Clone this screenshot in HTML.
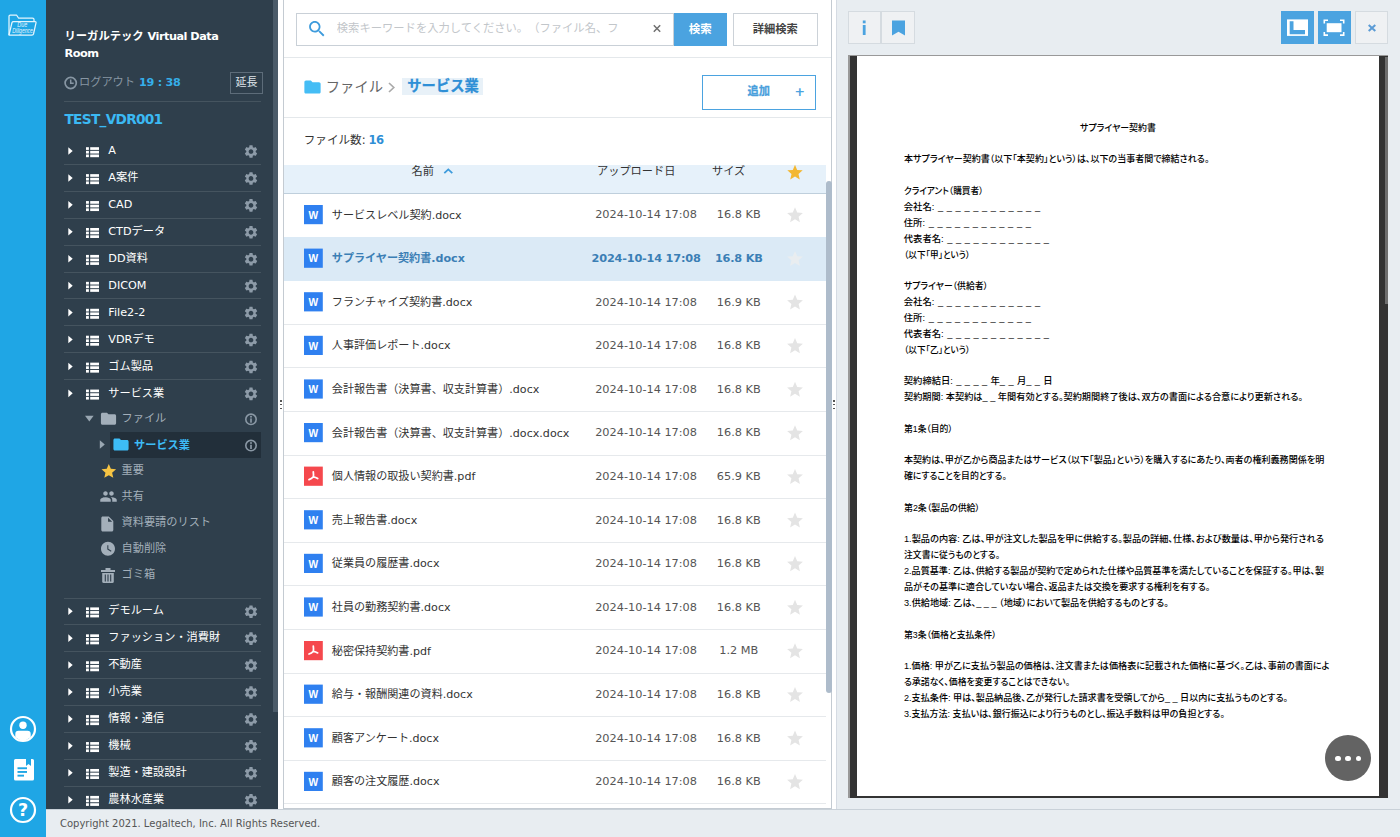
<!DOCTYPE html><html lang="ja"><head><meta charset="utf-8"><title>リーガルテック Virtual Data Room</title><style>
html,body{margin:0;padding:0}
body{width:1400px;height:837px;overflow:hidden;position:relative;background:#e8edf1;font-family:"DejaVu Sans","Liberation Sans","Noto Sans CJK JP",sans-serif;font-size:11.2px;color:#333}
div,span{box-sizing:border-box}
.a{position:absolute;white-space:nowrap}
.t{position:absolute;white-space:nowrap;line-height:20px;height:20px}
.rail{left:0;top:0;width:46px;height:837px;background:#1fa6e5}
.side{left:46px;top:0;width:232.5px;height:809px;background:#2f3f4c}
.sthumb{left:273px;top:0;width:5.2px;height:712px;background:#4b5b69}
.sdiv{left:64px;width:197px;height:1px;background:#45545f}
.srow{color:#fff;font-size:11.2px}
.sub{color:#a3afba;font-size:11.2px}
.foot{left:46px;top:809px;width:1354px;height:28px;background:#e8edf1;border-top:1px solid #c9d1d8}
.mid{left:283px;top:-1px;width:549px;height:810px;background:#fff;border:1px solid #c4cbd2}
.hl{left:284px;width:547px;height:1px;background:#e4e8eb}
.row{left:284px;width:542px}
.rt{font-size:11.2px;color:#333}
.rd{font-size:11px;color:#555}
.doc{font-family:"Liberation Sans","Noto Sans CJK JP",sans-serif;font-size:9.3px;color:#000;font-feature-settings:"palt";line-height:14px;height:14px;transform-origin:0 50%;font-weight:500}
</style></head><body>
<div class="a rail"></div>
<svg width="29" height="22" viewBox="0 0 29 22" style="position:absolute;left:8px;top:14px"><g fill="none" stroke="#e4f5fd" stroke-width="1.250" stroke-linejoin="round"><path d="M1 21V2.2Q1 1 2.200 1H8.500L10.500 4H24.500Q26 4 26 5.500V7.500"/><path d="M1 21L4 8.500Q4.300 7.500 5.500 7.500H27Q28.300 7.500 28 8.800L25.500 20Q25.200 21 24 21H1z"/></g>
<text x="9.300" y="13.400" font-size="6.400" fill="#e4f5fd" textLength="10" lengthAdjust="spacingAndGlyphs" font-family="Liberation Sans,sans-serif" font-style="italic">Due</text>
<text x="4.200" y="19.400" font-size="6.400" fill="#e4f5fd" textLength="20.500" lengthAdjust="spacingAndGlyphs" font-family="Liberation Sans,sans-serif" font-style="italic">Diligence</text></svg>
<svg width="28" height="28" viewBox="0 0 28 28" style="position:absolute;left:9px;top:715px"><circle cx="14" cy="14" r="12" fill="none" stroke="#fff" stroke-width="2.200"/><circle cx="14" cy="10.300" r="3.700" fill="#fff"/><path d="M6.300 22.300V19Q6.300 15.800 9.500 15.800H18.500Q21.700 15.800 21.700 19V22.300Q18.200 25.300 14 25.300Q9.800 25.300 6.300 22.300z" fill="#fff"/></svg>
<svg width="20" height="22" viewBox="0 0 20 22" style="position:absolute;left:14px;top:759px"><path d="M1.500 0H12V7L14.500 5L17 7V0H18.500Q20 0 20 1.500V20Q20 21.500 18.500 21.500H1.500Q0 21.500 0 20V1.500Q0 0 1.500 0z" fill="#fff"/><rect x="3.500" y="8.300" width="9.500" height="1.900" fill="#1fa6e5"/><rect x="3.500" y="12" width="9.500" height="1.900" fill="#1fa6e5"/><rect x="3.500" y="15.700" width="6.500" height="1.900" fill="#1fa6e5"/></svg>
<svg width="28" height="28" viewBox="0 0 28 28" style="position:absolute;left:9px;top:796px"><circle cx="14" cy="14" r="12" fill="none" stroke="#fff" stroke-width="2.200"/><text x="14" y="20.300" font-size="17.500" font-weight="bold" fill="#fff" text-anchor="middle" font-family="DejaVu Sans,Liberation Sans,sans-serif">?</text></svg>
<div class="a side"></div><div class="a sthumb"></div>
<div class="a" style="left:64.5px;top:28.2px;width:190px;white-space:normal;color:#fff;font-weight:bold;font-size:11.3px;line-height:17.1px">リーガルテック <span style="letter-spacing:-0.5px">Virtual Data Room</span></div>
<svg width="15" height="14" viewBox="0 0 15 14" style="position:absolute;left:63px;top:76px"><g transform="translate(0.700 0.000)"><circle cx="7" cy="7" r="5.600" fill="none" stroke="#8796a3" stroke-width="1.700"/><path d="M7 3.600V7.300H10" fill="none" stroke="#8796a3" stroke-width="1.500"/></g></svg>
<div class="t " style="left:79px;top:72.5px;color:#8796a3;font-size:11.200px">ログアウト</div>
<div class="t " style="left:139px;top:72.5px;color:#35aeea;font-weight:bold;font-size:11.2px;letter-spacing:-0.25px">19 : 38</div>
<div class="a" style="left:230px;top:72px;width:33px;height:22px;border:1px solid #5d6c79;color:#dfe5ea;font-size:11px;line-height:20px;text-align:center">延長</div>
<div class="a sdiv" style="top:101px"></div>
<div class="t " style="left:64.5px;top:109.0px;color:#3bb9f3;font-weight:bold;font-size:13.7px;letter-spacing:-0.72px">TEST_VDR001</div>
<svg width="5" height="8" viewBox="0 0 5 8" style="position:absolute;left:68px;top:147px"><g transform="translate(0.300 0.200)"><path d="M0 0L4.4 3.8L0 7.6z" fill="#fff"/></g></svg>
<svg width="13" height="11" viewBox="0 0 13 11" style="position:absolute;left:86px;top:147px"><g transform="translate(0.000 0.200)"><rect x="0" y="0" width="2.9" height="2.7" fill="#fff"/><rect x="4.2" y="0" width="8.8" height="2.7" fill="#fff"/><rect x="0" y="3.65" width="2.9" height="2.7" fill="#fff"/><rect x="4.2" y="3.65" width="8.8" height="2.7" fill="#fff"/><rect x="0" y="7.3" width="2.9" height="2.7" fill="#fff"/><rect x="4.2" y="7.3" width="8.8" height="2.7" fill="#fff"/></g></svg>
<div class="t srow" style="left:108.3px;top:141.2px;">A</div>
<svg width="16" height="17" viewBox="0 0 24.4586 25.9873" style="position:absolute;left:243px;top:143px"><g transform="translate(0.229 0.994)"><path d="M19.14 12.94c.04-.3.06-.61.06-.94 0-.32-.02-.64-.07-.94l2.03-1.58c.18-.14.23-.41.12-.61l-1.92-3.32c-.12-.22-.37-.29-.59-.22l-2.39.96c-.5-.38-1.03-.7-1.62-.94l-.36-2.54c-.04-.24-.24-.41-.48-.41h-3.84c-.24 0-.43.17-.47.41l-.36 2.54c-.59.24-1.13.57-1.62.94l-2.39-.96c-.22-.08-.47 0-.59.22L2.74 8.87c-.12.21-.08.47.12.61l2.03 1.58c-.05.3-.09.63-.09.94s.02.64.07.94l-2.03 1.58c-.18.14-.23.41-.12.61l1.92 3.32c.12.22.37.29.59.22l2.39-.96c.5.38 1.03.7 1.62.94l.36 2.54c.05.24.24.41.48.41h3.84c.24 0 .44-.17.47-.41l.36-2.54c.59-.24 1.13-.56 1.62-.94l2.39.96c.22.08.47 0 .59-.22l1.92-3.32c.12-.22.07-.47-.12-.61l-2.01-1.58zM12 15.6c-1.98 0-3.6-1.62-3.6-3.6s1.62-3.6 3.6-3.6 3.6 1.62 3.6 3.6-1.62 3.6-3.6 3.6z" fill="#8d9ba8"/></g></svg>
<div class="a sdiv" style="top:163.8px"></div>
<svg width="5" height="8" viewBox="0 0 5 8" style="position:absolute;left:68px;top:174px"><g transform="translate(0.300 0.130)"><path d="M0 0L4.4 3.8L0 7.6z" fill="#fff"/></g></svg>
<svg width="13" height="11" viewBox="0 0 13 11" style="position:absolute;left:86px;top:174px"><g transform="translate(0.000 0.130)"><rect x="0" y="0" width="2.9" height="2.7" fill="#fff"/><rect x="4.2" y="0" width="8.8" height="2.7" fill="#fff"/><rect x="0" y="3.65" width="2.9" height="2.7" fill="#fff"/><rect x="4.2" y="3.65" width="8.8" height="2.7" fill="#fff"/><rect x="0" y="7.3" width="2.9" height="2.7" fill="#fff"/><rect x="4.2" y="7.3" width="8.8" height="2.7" fill="#fff"/></g></svg>
<div class="t srow" style="left:108.3px;top:168.13px;">A案件</div>
<svg width="16" height="17" viewBox="0 0 24.4586 25.9873" style="position:absolute;left:243px;top:170px"><g transform="translate(0.229 0.887)"><path d="M19.14 12.94c.04-.3.06-.61.06-.94 0-.32-.02-.64-.07-.94l2.03-1.58c.18-.14.23-.41.12-.61l-1.92-3.32c-.12-.22-.37-.29-.59-.22l-2.39.96c-.5-.38-1.03-.7-1.62-.94l-.36-2.54c-.04-.24-.24-.41-.48-.41h-3.84c-.24 0-.43.17-.47.41l-.36 2.54c-.59.24-1.13.57-1.62.94l-2.39-.96c-.22-.08-.47 0-.59.22L2.74 8.87c-.12.21-.08.47.12.61l2.03 1.58c-.05.3-.09.63-.09.94s.02.64.07.94l-2.03 1.58c-.18.14-.23.41-.12.61l1.92 3.32c.12.22.37.29.59.22l2.39-.96c.5.38 1.03.7 1.62.94l.36 2.54c.05.24.24.41.48.41h3.84c.24 0 .44-.17.47-.41l.36-2.54c.59-.24 1.13-.56 1.62-.94l2.39.96c.22.08.47 0 .59-.22l1.92-3.32c.12-.22.07-.47-.12-.61l-2.01-1.58zM12 15.6c-1.98 0-3.6-1.62-3.6-3.6s1.62-3.6 3.6-3.6 3.6 1.62 3.6 3.6-1.62 3.6-3.6 3.6z" fill="#8d9ba8"/></g></svg>
<div class="a sdiv" style="top:190.73px"></div>
<svg width="5" height="8" viewBox="0 0 5 8" style="position:absolute;left:68px;top:201px"><g transform="translate(0.300 0.060)"><path d="M0 0L4.4 3.8L0 7.6z" fill="#fff"/></g></svg>
<svg width="13" height="11" viewBox="0 0 13 11" style="position:absolute;left:86px;top:201px"><g transform="translate(0.000 0.060)"><rect x="0" y="0" width="2.9" height="2.7" fill="#fff"/><rect x="4.2" y="0" width="8.8" height="2.7" fill="#fff"/><rect x="0" y="3.65" width="2.9" height="2.7" fill="#fff"/><rect x="4.2" y="3.65" width="8.8" height="2.7" fill="#fff"/><rect x="0" y="7.3" width="2.9" height="2.7" fill="#fff"/><rect x="4.2" y="7.3" width="8.8" height="2.7" fill="#fff"/></g></svg>
<div class="t srow" style="left:108.3px;top:195.06px;">CAD</div>
<svg width="16" height="17" viewBox="0 0 24.4586 25.9873" style="position:absolute;left:243px;top:197px"><g transform="translate(0.229 0.780)"><path d="M19.14 12.94c.04-.3.06-.61.06-.94 0-.32-.02-.64-.07-.94l2.03-1.58c.18-.14.23-.41.12-.61l-1.92-3.32c-.12-.22-.37-.29-.59-.22l-2.39.96c-.5-.38-1.03-.7-1.62-.94l-.36-2.54c-.04-.24-.24-.41-.48-.41h-3.84c-.24 0-.43.17-.47.41l-.36 2.54c-.59.24-1.13.57-1.62.94l-2.39-.96c-.22-.08-.47 0-.59.22L2.74 8.87c-.12.21-.08.47.12.61l2.03 1.58c-.05.3-.09.63-.09.94s.02.64.07.94l-2.03 1.58c-.18.14-.23.41-.12.61l1.92 3.32c.12.22.37.29.59.22l2.39-.96c.5.38 1.03.7 1.62.94l.36 2.54c.05.24.24.41.48.41h3.84c.24 0 .44-.17.47-.41l.36-2.54c.59-.24 1.13-.56 1.62-.94l2.39.96c.22.08.47 0 .59-.22l1.92-3.32c.12-.22.07-.47-.12-.61l-2.01-1.58zM12 15.6c-1.98 0-3.6-1.62-3.6-3.6s1.62-3.6 3.6-3.6 3.6 1.62 3.6 3.6-1.62 3.6-3.6 3.6z" fill="#8d9ba8"/></g></svg>
<div class="a sdiv" style="top:217.66px"></div>
<svg width="5" height="9" viewBox="0 0 5 9" style="position:absolute;left:68px;top:227px"><g transform="translate(0.300 0.990)"><path d="M0 0L4.4 3.8L0 7.6z" fill="#fff"/></g></svg>
<svg width="13" height="11" viewBox="0 0 13 11" style="position:absolute;left:86px;top:227px"><g transform="translate(0.000 0.990)"><rect x="0" y="0" width="2.9" height="2.7" fill="#fff"/><rect x="4.2" y="0" width="8.8" height="2.7" fill="#fff"/><rect x="0" y="3.65" width="2.9" height="2.7" fill="#fff"/><rect x="4.2" y="3.65" width="8.8" height="2.7" fill="#fff"/><rect x="0" y="7.3" width="2.9" height="2.7" fill="#fff"/><rect x="4.2" y="7.3" width="8.8" height="2.7" fill="#fff"/></g></svg>
<div class="t srow" style="left:108.3px;top:221.99px;">CTDデータ</div>
<svg width="16" height="17" viewBox="0 0 24.4586 25.9873" style="position:absolute;left:243px;top:224px"><g transform="translate(0.229 0.673)"><path d="M19.14 12.94c.04-.3.06-.61.06-.94 0-.32-.02-.64-.07-.94l2.03-1.58c.18-.14.23-.41.12-.61l-1.92-3.32c-.12-.22-.37-.29-.59-.22l-2.39.96c-.5-.38-1.03-.7-1.62-.94l-.36-2.54c-.04-.24-.24-.41-.48-.41h-3.84c-.24 0-.43.17-.47.41l-.36 2.54c-.59.24-1.13.57-1.62.94l-2.39-.96c-.22-.08-.47 0-.59.22L2.74 8.87c-.12.21-.08.47.12.61l2.03 1.58c-.05.3-.09.63-.09.94s.02.64.07.94l-2.03 1.58c-.18.14-.23.41-.12.61l1.92 3.32c.12.22.37.29.59.22l2.39-.96c.5.38 1.03.7 1.62.94l.36 2.54c.05.24.24.41.48.41h3.84c.24 0 .44-.17.47-.41l.36-2.54c.59-.24 1.13-.56 1.62-.94l2.39.96c.22.08.47 0 .59-.22l1.92-3.32c.12-.22.07-.47-.12-.61l-2.01-1.58zM12 15.6c-1.98 0-3.6-1.62-3.6-3.6s1.62-3.6 3.6-3.6 3.6 1.62 3.6 3.6-1.62 3.6-3.6 3.6z" fill="#8d9ba8"/></g></svg>
<div class="a sdiv" style="top:244.59px"></div>
<svg width="5" height="9" viewBox="0 0 5 9" style="position:absolute;left:68px;top:254px"><g transform="translate(0.300 0.920)"><path d="M0 0L4.4 3.8L0 7.6z" fill="#fff"/></g></svg>
<svg width="13" height="11" viewBox="0 0 13 11" style="position:absolute;left:86px;top:254px"><g transform="translate(0.000 0.920)"><rect x="0" y="0" width="2.9" height="2.7" fill="#fff"/><rect x="4.2" y="0" width="8.8" height="2.7" fill="#fff"/><rect x="0" y="3.65" width="2.9" height="2.7" fill="#fff"/><rect x="4.2" y="3.65" width="8.8" height="2.7" fill="#fff"/><rect x="0" y="7.3" width="2.9" height="2.7" fill="#fff"/><rect x="4.2" y="7.3" width="8.8" height="2.7" fill="#fff"/></g></svg>
<div class="t srow" style="left:108.3px;top:248.92px;">DD資料</div>
<svg width="16" height="17" viewBox="0 0 24.4586 25.9873" style="position:absolute;left:243px;top:251px"><g transform="translate(0.229 0.566)"><path d="M19.14 12.94c.04-.3.06-.61.06-.94 0-.32-.02-.64-.07-.94l2.03-1.58c.18-.14.23-.41.12-.61l-1.92-3.32c-.12-.22-.37-.29-.59-.22l-2.39.96c-.5-.38-1.03-.7-1.62-.94l-.36-2.54c-.04-.24-.24-.41-.48-.41h-3.84c-.24 0-.43.17-.47.41l-.36 2.54c-.59.24-1.13.57-1.62.94l-2.39-.96c-.22-.08-.47 0-.59.22L2.74 8.87c-.12.21-.08.47.12.61l2.03 1.58c-.05.3-.09.63-.09.94s.02.64.07.94l-2.03 1.58c-.18.14-.23.41-.12.61l1.92 3.32c.12.22.37.29.59.22l2.39-.96c.5.38 1.03.7 1.62.94l.36 2.54c.05.24.24.41.48.41h3.84c.24 0 .44-.17.47-.41l.36-2.54c.59-.24 1.13-.56 1.62-.94l2.39.96c.22.08.47 0 .59-.22l1.92-3.32c.12-.22.07-.47-.12-.61l-2.01-1.58zM12 15.6c-1.98 0-3.6-1.62-3.6-3.6s1.62-3.6 3.6-3.6 3.6 1.62 3.6 3.6-1.62 3.6-3.6 3.6z" fill="#8d9ba8"/></g></svg>
<div class="a sdiv" style="top:271.52px"></div>
<svg width="5" height="9" viewBox="0 0 5 9" style="position:absolute;left:68px;top:281px"><g transform="translate(0.300 0.850)"><path d="M0 0L4.4 3.8L0 7.6z" fill="#fff"/></g></svg>
<svg width="13" height="11" viewBox="0 0 13 11" style="position:absolute;left:86px;top:281px"><g transform="translate(0.000 0.850)"><rect x="0" y="0" width="2.9" height="2.7" fill="#fff"/><rect x="4.2" y="0" width="8.8" height="2.7" fill="#fff"/><rect x="0" y="3.65" width="2.9" height="2.7" fill="#fff"/><rect x="4.2" y="3.65" width="8.8" height="2.7" fill="#fff"/><rect x="0" y="7.3" width="2.9" height="2.7" fill="#fff"/><rect x="4.2" y="7.3" width="8.8" height="2.7" fill="#fff"/></g></svg>
<div class="t srow" style="left:108.3px;top:275.85px;">DICOM</div>
<svg width="16" height="17" viewBox="0 0 24.4586 25.9873" style="position:absolute;left:243px;top:278px"><g transform="translate(0.229 0.459)"><path d="M19.14 12.94c.04-.3.06-.61.06-.94 0-.32-.02-.64-.07-.94l2.03-1.58c.18-.14.23-.41.12-.61l-1.92-3.32c-.12-.22-.37-.29-.59-.22l-2.39.96c-.5-.38-1.03-.7-1.62-.94l-.36-2.54c-.04-.24-.24-.41-.48-.41h-3.84c-.24 0-.43.17-.47.41l-.36 2.54c-.59.24-1.13.57-1.62.94l-2.39-.96c-.22-.08-.47 0-.59.22L2.74 8.87c-.12.21-.08.47.12.61l2.03 1.58c-.05.3-.09.63-.09.94s.02.64.07.94l-2.03 1.58c-.18.14-.23.41-.12.61l1.92 3.32c.12.22.37.29.59.22l2.39-.96c.5.38 1.03.7 1.62.94l.36 2.54c.05.24.24.41.48.41h3.84c.24 0 .44-.17.47-.41l.36-2.54c.59-.24 1.13-.56 1.62-.94l2.39.96c.22.08.47 0 .59-.22l1.92-3.32c.12-.22.07-.47-.12-.61l-2.01-1.58zM12 15.6c-1.98 0-3.6-1.62-3.6-3.6s1.62-3.6 3.6-3.6 3.6 1.62 3.6 3.6-1.62 3.6-3.6 3.6z" fill="#8d9ba8"/></g></svg>
<div class="a sdiv" style="top:298.45px"></div>
<svg width="5" height="9" viewBox="0 0 5 9" style="position:absolute;left:68px;top:308px"><g transform="translate(0.300 0.780)"><path d="M0 0L4.4 3.8L0 7.6z" fill="#fff"/></g></svg>
<svg width="13" height="11" viewBox="0 0 13 11" style="position:absolute;left:86px;top:308px"><g transform="translate(0.000 0.780)"><rect x="0" y="0" width="2.9" height="2.7" fill="#fff"/><rect x="4.2" y="0" width="8.8" height="2.7" fill="#fff"/><rect x="0" y="3.65" width="2.9" height="2.7" fill="#fff"/><rect x="4.2" y="3.65" width="8.8" height="2.7" fill="#fff"/><rect x="0" y="7.3" width="2.9" height="2.7" fill="#fff"/><rect x="4.2" y="7.3" width="8.8" height="2.7" fill="#fff"/></g></svg>
<div class="t srow" style="left:108.3px;top:302.78px;">File2-2</div>
<svg width="16" height="16" viewBox="0 0 24.4586 24.4586" style="position:absolute;left:243px;top:305px"><g transform="translate(0.229 0.352)"><path d="M19.14 12.94c.04-.3.06-.61.06-.94 0-.32-.02-.64-.07-.94l2.03-1.58c.18-.14.23-.41.12-.61l-1.92-3.32c-.12-.22-.37-.29-.59-.22l-2.39.96c-.5-.38-1.03-.7-1.62-.94l-.36-2.54c-.04-.24-.24-.41-.48-.41h-3.84c-.24 0-.43.17-.47.41l-.36 2.54c-.59.24-1.13.57-1.62.94l-2.39-.96c-.22-.08-.47 0-.59.22L2.74 8.87c-.12.21-.08.47.12.61l2.03 1.58c-.05.3-.09.63-.09.94s.02.64.07.94l-2.03 1.58c-.18.14-.23.41-.12.61l1.92 3.32c.12.22.37.29.59.22l2.39-.96c.5.38 1.03.7 1.62.94l.36 2.54c.05.24.24.41.48.41h3.84c.24 0 .44-.17.47-.41l.36-2.54c.59-.24 1.13-.56 1.62-.94l2.39.96c.22.08.47 0 .59-.22l1.92-3.32c.12-.22.07-.47-.12-.61l-2.01-1.58zM12 15.6c-1.98 0-3.6-1.62-3.6-3.6s1.62-3.6 3.6-3.6 3.6 1.62 3.6 3.6-1.62 3.6-3.6 3.6z" fill="#8d9ba8"/></g></svg>
<div class="a sdiv" style="top:325.38px"></div>
<svg width="5" height="9" viewBox="0 0 5 9" style="position:absolute;left:68px;top:335px"><g transform="translate(0.300 0.710)"><path d="M0 0L4.4 3.8L0 7.6z" fill="#fff"/></g></svg>
<svg width="13" height="11" viewBox="0 0 13 11" style="position:absolute;left:86px;top:335px"><g transform="translate(0.000 0.710)"><rect x="0" y="0" width="2.9" height="2.7" fill="#fff"/><rect x="4.2" y="0" width="8.8" height="2.7" fill="#fff"/><rect x="0" y="3.65" width="2.9" height="2.7" fill="#fff"/><rect x="4.2" y="3.65" width="8.8" height="2.7" fill="#fff"/><rect x="0" y="7.3" width="2.9" height="2.7" fill="#fff"/><rect x="4.2" y="7.3" width="8.8" height="2.7" fill="#fff"/></g></svg>
<div class="t srow" style="left:108.3px;top:329.71px;">VDRデモ</div>
<svg width="16" height="16" viewBox="0 0 24.4586 24.4586" style="position:absolute;left:243px;top:332px"><g transform="translate(0.229 0.245)"><path d="M19.14 12.94c.04-.3.06-.61.06-.94 0-.32-.02-.64-.07-.94l2.03-1.58c.18-.14.23-.41.12-.61l-1.92-3.32c-.12-.22-.37-.29-.59-.22l-2.39.96c-.5-.38-1.03-.7-1.62-.94l-.36-2.54c-.04-.24-.24-.41-.48-.41h-3.84c-.24 0-.43.17-.47.41l-.36 2.54c-.59.24-1.13.57-1.62.94l-2.39-.96c-.22-.08-.47 0-.59.22L2.74 8.87c-.12.21-.08.47.12.61l2.03 1.58c-.05.3-.09.63-.09.94s.02.64.07.94l-2.03 1.58c-.18.14-.23.41-.12.61l1.92 3.32c.12.22.37.29.59.22l2.39-.96c.5.38 1.03.7 1.62.94l.36 2.54c.05.24.24.41.48.41h3.84c.24 0 .44-.17.47-.41l.36-2.54c.59-.24 1.13-.56 1.62-.94l2.39.96c.22.08.47 0 .59-.22l1.92-3.32c.12-.22.07-.47-.12-.61l-2.01-1.58zM12 15.6c-1.98 0-3.6-1.62-3.6-3.6s1.62-3.6 3.6-3.6 3.6 1.62 3.6 3.6-1.62 3.6-3.6 3.6z" fill="#8d9ba8"/></g></svg>
<div class="a sdiv" style="top:352.31px"></div>
<svg width="5" height="9" viewBox="0 0 5 9" style="position:absolute;left:68px;top:362px"><g transform="translate(0.300 0.640)"><path d="M0 0L4.4 3.8L0 7.6z" fill="#fff"/></g></svg>
<svg width="13" height="11" viewBox="0 0 13 11" style="position:absolute;left:86px;top:362px"><g transform="translate(0.000 0.640)"><rect x="0" y="0" width="2.9" height="2.7" fill="#fff"/><rect x="4.2" y="0" width="8.8" height="2.7" fill="#fff"/><rect x="0" y="3.65" width="2.9" height="2.7" fill="#fff"/><rect x="4.2" y="3.65" width="8.8" height="2.7" fill="#fff"/><rect x="0" y="7.3" width="2.9" height="2.7" fill="#fff"/><rect x="4.2" y="7.3" width="8.8" height="2.7" fill="#fff"/></g></svg>
<div class="t srow" style="left:108.3px;top:356.64px;">ゴム製品</div>
<svg width="16" height="16" viewBox="0 0 24.4586 24.4586" style="position:absolute;left:243px;top:359px"><g transform="translate(0.229 0.138)"><path d="M19.14 12.94c.04-.3.06-.61.06-.94 0-.32-.02-.64-.07-.94l2.03-1.58c.18-.14.23-.41.12-.61l-1.92-3.32c-.12-.22-.37-.29-.59-.22l-2.39.96c-.5-.38-1.03-.7-1.62-.94l-.36-2.54c-.04-.24-.24-.41-.48-.41h-3.84c-.24 0-.43.17-.47.41l-.36 2.54c-.59.24-1.13.57-1.62.94l-2.39-.96c-.22-.08-.47 0-.59.22L2.74 8.87c-.12.21-.08.47.12.61l2.03 1.58c-.05.3-.09.63-.09.94s.02.64.07.94l-2.03 1.58c-.18.14-.23.41-.12.61l1.92 3.32c.12.22.37.29.59.22l2.39-.96c.5.38 1.03.7 1.62.94l.36 2.54c.05.24.24.41.48.41h3.84c.24 0 .44-.17.47-.41l.36-2.54c.59-.24 1.13-.56 1.62-.94l2.39.96c.22.08.47 0 .59-.22l1.92-3.32c.12-.22.07-.47-.12-.61l-2.01-1.58zM12 15.6c-1.98 0-3.6-1.62-3.6-3.6s1.62-3.6 3.6-3.6 3.6 1.62 3.6 3.6-1.62 3.6-3.6 3.6z" fill="#8d9ba8"/></g></svg>
<div class="a sdiv" style="top:379.24px"></div>
<svg width="5" height="9" viewBox="0 0 5 9" style="position:absolute;left:68px;top:389px"><g transform="translate(0.300 0.570)"><path d="M0 0L4.4 3.8L0 7.6z" fill="#fff"/></g></svg>
<svg width="13" height="11" viewBox="0 0 13 11" style="position:absolute;left:86px;top:389px"><g transform="translate(0.000 0.570)"><rect x="0" y="0" width="2.9" height="2.7" fill="#fff"/><rect x="4.2" y="0" width="8.8" height="2.7" fill="#fff"/><rect x="0" y="3.65" width="2.9" height="2.7" fill="#fff"/><rect x="4.2" y="3.65" width="8.8" height="2.7" fill="#fff"/><rect x="0" y="7.3" width="2.9" height="2.7" fill="#fff"/><rect x="4.2" y="7.3" width="8.8" height="2.7" fill="#fff"/></g></svg>
<div class="t srow" style="left:108.3px;top:383.57px;">サービス業</div>
<svg width="16" height="16" viewBox="0 0 24.4586 24.4586" style="position:absolute;left:243px;top:386px"><g transform="translate(0.229 0.031)"><path d="M19.14 12.94c.04-.3.06-.61.06-.94 0-.32-.02-.64-.07-.94l2.03-1.58c.18-.14.23-.41.12-.61l-1.92-3.32c-.12-.22-.37-.29-.59-.22l-2.39.96c-.5-.38-1.03-.7-1.62-.94l-.36-2.54c-.04-.24-.24-.41-.48-.41h-3.84c-.24 0-.43.17-.47.41l-.36 2.54c-.59.24-1.13.57-1.62.94l-2.39-.96c-.22-.08-.47 0-.59.22L2.74 8.87c-.12.21-.08.47.12.61l2.03 1.58c-.05.3-.09.63-.09.94s.02.64.07.94l-2.03 1.58c-.18.14-.23.41-.12.61l1.92 3.32c.12.22.37.29.59.22l2.39-.96c.5.38 1.03.7 1.62.94l.36 2.54c.05.24.24.41.48.41h3.84c.24 0 .44-.17.47-.41l.36-2.54c.59-.24 1.13-.56 1.62-.94l2.39.96c.22.08.47 0 .59-.22l1.92-3.32c.12-.22.07-.47-.12-.61l-2.01-1.58zM12 15.6c-1.98 0-3.6-1.62-3.6-3.6s1.62-3.6 3.6-3.6 3.6 1.62 3.6 3.6-1.62 3.6-3.6 3.6z" fill="#8d9ba8"/></g></svg>
<svg width="9" height="7" viewBox="0 0 9 7" style="position:absolute;left:85px;top:415px"><g transform="translate(0.000 0.800)"><path d="M0 0L8.6 0L4.3 5.6z" fill="#9aa7b2"/></g></svg>
<svg width="19" height="19" viewBox="0 0 25.0549 25.0549" style="position:absolute;left:99px;top:409px"><g transform="translate(0.527 0.791)"><path d="M10 4H4c-1.1 0-1.99.9-1.99 2L2 18c0 1.1.9 2 2 2h16c1.1 0 2-.9 2-2V8c0-1.1-.9-2-2-2h-8l-2-2z" fill="#a3afba"/></g></svg>
<div class="t sub" style="left:121.5px;top:409.3px;">ファイル</div>
<svg width="14" height="15" viewBox="0 0 14 15" style="position:absolute;left:244px;top:412px"><g transform="translate(0.000 0.300)"><circle cx="7" cy="7" r="5.200" fill="none" stroke="#8a98a5" stroke-width="1.600"/><circle cx="7" cy="4.400" r="1" fill="#8a98a5"/><rect x="6.150" y="6.100" width="1.700" height="4.300" fill="#8a98a5"/></g></svg>
<div class="a" style="left:109.500px;top:432px;width:151.500px;height:25.500px;background:#222f3a"></div>
<svg width="6" height="9" viewBox="0 0 6 9" style="position:absolute;left:99px;top:440px"><g transform="translate(0.800 0.300)"><path d="M0 0L5 4.2L0 8.4z" fill="#9aa7b2"/></g></svg>
<svg width="20" height="19" viewBox="0 0 26.3736 25.0549" style="position:absolute;left:111px;top:435px"><g transform="translate(1.187 0.527)"><path d="M10 4H4c-1.1 0-1.99.9-1.99 2L2 18c0 1.1.9 2 2 2h16c1.1 0 2-.9 2-2V8c0-1.1-.9-2-2-2h-8l-2-2z" fill="#3dbcf6"/></g></svg>
<div class="t " style="left:134px;top:435.5px;color:#3dbcf6;font-weight:bold;font-size:11.200px">サービス業</div>
<svg width="14" height="15" viewBox="0 0 14 15" style="position:absolute;left:244px;top:438px"><g transform="translate(0.000 0.600)"><circle cx="7" cy="7" r="5.200" fill="none" stroke="#8a98a5" stroke-width="1.600"/><circle cx="7" cy="4.400" r="1" fill="#8a98a5"/><rect x="6.150" y="6.100" width="1.700" height="4.300" fill="#8a98a5"/></g></svg>
<svg width="18" height="19" viewBox="0 0 24.6857 26.0571" style="position:absolute;left:100px;top:462px"><g transform="translate(0.069 0.754)"><path d="M12 17.27L18.18 21l-1.64-7.03L22 9.24l-7.19-.61L12 2 9.19 8.63 2 9.24l5.46 4.73L5.82 21z" fill="#f6c443"/></g></svg>
<div class="t sub" style="left:121.5px;top:461.3px;">重要</div>
<svg width="19" height="19" viewBox="0 0 25.3333 25.3333" style="position:absolute;left:99px;top:487px"><g transform="translate(0.667 0.667)"><path d="M16 11c1.66 0 2.99-1.34 2.99-3S17.66 5 16 5c-1.66 0-3 1.34-3 3s1.34 3 3 3zm-8 0c1.66 0 2.99-1.34 2.99-3S9.66 5 8 5C6.34 5 5 6.34 5 8s1.34 3 3 3zm0 2c-2.33 0-7 1.17-7 3.5V19h14v-2.5c0-2.330-4.670-3.500-7-3.500zm8 0c-.29 0-.62.02-.97.05 1.160.84 1.970 1.970 1.970 3.450V19h6v-2.500c0-2.330-4.670-3.500-7-3.500z" fill="#a3afba"/></g></svg>
<div class="t sub" style="left:121.5px;top:487.3px;">共有</div>
<svg width="19" height="18" viewBox="0 0 25.3333 24" style="position:absolute;left:98px;top:515px"><g transform="translate(0.400 0.000)"><path d="M6 2c-1.100 0-1.990.9-1.990 2L4 20c0 1.100.89 2 1.990 2H18c1.100 0 2-.9 2-2V8l-6-6H6zm7 7V3.500L18.500 9H13z" fill="#a3afba"/></g></svg>
<div class="t sub" style="left:121.5px;top:513.3px;">資料要請のリスト</div>
<svg width="18" height="18" viewBox="0 0 25.7143 25.7143" style="position:absolute;left:99px;top:540px"><g transform="translate(0.857 0.429)"><path d="M12 2C6.500 2 2 6.500 2 12s4.500 10 10 10 10-4.500 10-10S17.500 2 12 2zm4.200 14.200L11 13V7h1.500v5.200l4.500 2.700-.8 1.300z" fill="#a3afba"/></g></svg>
<div class="t sub" style="left:121.5px;top:539.3px;">自動削除</div>
<svg width="14" height="15" viewBox="0 0 14 15" style="position:absolute;left:101px;top:568px"><rect x="0" y="2" width="14" height="2" fill="#a3afba"/><rect x="4.500" y="0" width="5" height="2.500" fill="#a3afba"/><path d="M1.200 5H12.800V13.500Q12.800 15 11.300 15H2.700Q1.200 15 1.200 13.500z" fill="#a3afba"/><path d="M4.300 6.500v7M7 6.500v7M9.700 6.500v7" stroke="#2f3f4c" stroke-width="1.100"/></svg>
<div class="t sub" style="left:121.5px;top:565.3px;">ゴミ箱</div>
<div class="a sdiv" style="top:597.500px"></div>
<svg width="5" height="9" viewBox="0 0 5 9" style="position:absolute;left:68px;top:607px"><g transform="translate(0.300 0.400)"><path d="M0 0L4.4 3.8L0 7.6z" fill="#fff"/></g></svg>
<svg width="13" height="11" viewBox="0 0 13 11" style="position:absolute;left:86px;top:607px"><g transform="translate(0.000 0.400)"><rect x="0" y="0" width="2.9" height="2.7" fill="#fff"/><rect x="4.2" y="0" width="8.8" height="2.7" fill="#fff"/><rect x="0" y="3.65" width="2.9" height="2.7" fill="#fff"/><rect x="4.2" y="3.65" width="8.8" height="2.7" fill="#fff"/><rect x="0" y="7.3" width="2.9" height="2.7" fill="#fff"/><rect x="4.2" y="7.3" width="8.8" height="2.7" fill="#fff"/></g></svg>
<div class="t srow" style="left:108.3px;top:601.4px;">デモルーム</div>
<svg width="16" height="17" viewBox="0 0 24.4586 25.9873" style="position:absolute;left:243px;top:603px"><g transform="translate(0.229 1.299)"><path d="M19.14 12.94c.04-.3.06-.61.06-.94 0-.32-.02-.64-.07-.94l2.03-1.58c.18-.14.23-.41.12-.61l-1.92-3.32c-.12-.22-.37-.29-.59-.22l-2.39.96c-.5-.38-1.03-.7-1.62-.94l-.36-2.54c-.04-.24-.24-.41-.48-.41h-3.84c-.24 0-.43.17-.47.41l-.36 2.54c-.59.24-1.13.57-1.62.94l-2.39-.96c-.22-.08-.47 0-.59.22L2.74 8.87c-.12.21-.08.47.12.61l2.03 1.58c-.05.3-.09.63-.09.94s.02.64.07.94l-2.03 1.58c-.18.14-.23.41-.12.61l1.92 3.32c.12.22.37.29.59.22l2.39-.96c.5.38 1.03.7 1.62.94l.36 2.54c.05.24.24.41.48.41h3.84c.24 0 .44-.17.47-.41l.36-2.54c.59-.24 1.13-.56 1.62-.94l2.39.96c.22.08.47 0 .59-.22l1.92-3.32c.12-.22.07-.47-.12-.61l-2.01-1.58zM12 15.6c-1.98 0-3.6-1.62-3.6-3.6s1.62-3.6 3.6-3.6 3.6 1.62 3.6 3.6-1.62 3.6-3.6 3.6z" fill="#8d9ba8"/></g></svg>
<div class="a sdiv" style="top:624.0px"></div>
<svg width="5" height="8" viewBox="0 0 5 8" style="position:absolute;left:68px;top:634px"><g transform="translate(0.300 0.330)"><path d="M0 0L4.4 3.8L0 7.6z" fill="#fff"/></g></svg>
<svg width="13" height="11" viewBox="0 0 13 11" style="position:absolute;left:86px;top:634px"><g transform="translate(0.000 0.330)"><rect x="0" y="0" width="2.9" height="2.7" fill="#fff"/><rect x="4.2" y="0" width="8.8" height="2.7" fill="#fff"/><rect x="0" y="3.65" width="2.9" height="2.7" fill="#fff"/><rect x="4.2" y="3.65" width="8.8" height="2.7" fill="#fff"/><rect x="0" y="7.3" width="2.9" height="2.7" fill="#fff"/><rect x="4.2" y="7.3" width="8.8" height="2.7" fill="#fff"/></g></svg>
<div class="t srow" style="left:108.3px;top:628.33px;">ファッション・消費財</div>
<svg width="16" height="17" viewBox="0 0 24.4586 25.9873" style="position:absolute;left:243px;top:630px"><g transform="translate(0.229 1.192)"><path d="M19.14 12.94c.04-.3.06-.61.06-.94 0-.32-.02-.64-.07-.94l2.03-1.58c.18-.14.23-.41.12-.61l-1.92-3.32c-.12-.22-.37-.29-.59-.22l-2.39.96c-.5-.38-1.03-.7-1.62-.94l-.36-2.54c-.04-.24-.24-.41-.48-.41h-3.84c-.24 0-.43.17-.47.41l-.36 2.54c-.59.24-1.13.57-1.62.94l-2.39-.96c-.22-.08-.47 0-.59.22L2.74 8.87c-.12.21-.08.47.12.61l2.03 1.58c-.05.3-.09.63-.09.94s.02.64.07.94l-2.03 1.58c-.18.14-.23.41-.12.61l1.92 3.32c.12.22.37.29.59.22l2.39-.96c.5.38 1.03.7 1.62.94l.36 2.54c.05.24.24.41.48.41h3.84c.24 0 .44-.17.47-.41l.36-2.54c.59-.24 1.13-.56 1.62-.94l2.39.96c.22.08.47 0 .59-.22l1.92-3.32c.12-.22.07-.47-.12-.61l-2.01-1.58zM12 15.6c-1.98 0-3.6-1.62-3.6-3.6s1.62-3.6 3.6-3.6 3.6 1.62 3.6 3.6-1.62 3.6-3.6 3.6z" fill="#8d9ba8"/></g></svg>
<div class="a sdiv" style="top:650.93px"></div>
<svg width="5" height="8" viewBox="0 0 5 8" style="position:absolute;left:68px;top:661px"><g transform="translate(0.300 0.260)"><path d="M0 0L4.4 3.8L0 7.6z" fill="#fff"/></g></svg>
<svg width="13" height="11" viewBox="0 0 13 11" style="position:absolute;left:86px;top:661px"><g transform="translate(0.000 0.260)"><rect x="0" y="0" width="2.9" height="2.7" fill="#fff"/><rect x="4.2" y="0" width="8.8" height="2.7" fill="#fff"/><rect x="0" y="3.65" width="2.9" height="2.7" fill="#fff"/><rect x="4.2" y="3.65" width="8.8" height="2.7" fill="#fff"/><rect x="0" y="7.3" width="2.9" height="2.7" fill="#fff"/><rect x="4.2" y="7.3" width="8.8" height="2.7" fill="#fff"/></g></svg>
<div class="t srow" style="left:108.3px;top:655.26px;">不動産</div>
<svg width="16" height="17" viewBox="0 0 24.4586 25.9873" style="position:absolute;left:243px;top:657px"><g transform="translate(0.229 1.085)"><path d="M19.14 12.94c.04-.3.06-.61.06-.94 0-.32-.02-.64-.07-.94l2.03-1.58c.18-.14.23-.41.12-.61l-1.92-3.32c-.12-.22-.37-.29-.59-.22l-2.39.96c-.5-.38-1.03-.7-1.62-.94l-.36-2.54c-.04-.24-.24-.41-.48-.41h-3.84c-.24 0-.43.17-.47.41l-.36 2.54c-.59.24-1.13.57-1.62.94l-2.39-.96c-.22-.08-.47 0-.59.22L2.74 8.87c-.12.21-.08.47.12.61l2.03 1.58c-.05.3-.09.63-.09.94s.02.64.07.94l-2.03 1.58c-.18.14-.23.41-.12.61l1.92 3.32c.12.22.37.29.59.22l2.39-.96c.5.38 1.03.7 1.62.94l.36 2.54c.05.24.24.41.48.41h3.84c.24 0 .44-.17.47-.41l.36-2.54c.59-.24 1.13-.56 1.62-.94l2.39.96c.22.08.47 0 .59-.22l1.92-3.32c.12-.22.07-.47-.12-.61l-2.01-1.58zM12 15.6c-1.98 0-3.6-1.62-3.6-3.6s1.62-3.6 3.6-3.6 3.6 1.62 3.6 3.6-1.62 3.6-3.6 3.6z" fill="#8d9ba8"/></g></svg>
<div class="a sdiv" style="top:677.86px"></div>
<svg width="5" height="8" viewBox="0 0 5 8" style="position:absolute;left:68px;top:688px"><g transform="translate(0.300 0.190)"><path d="M0 0L4.4 3.8L0 7.6z" fill="#fff"/></g></svg>
<svg width="13" height="11" viewBox="0 0 13 11" style="position:absolute;left:86px;top:688px"><g transform="translate(0.000 0.190)"><rect x="0" y="0" width="2.9" height="2.7" fill="#fff"/><rect x="4.2" y="0" width="8.8" height="2.7" fill="#fff"/><rect x="0" y="3.65" width="2.9" height="2.7" fill="#fff"/><rect x="4.2" y="3.65" width="8.8" height="2.7" fill="#fff"/><rect x="0" y="7.3" width="2.9" height="2.7" fill="#fff"/><rect x="4.2" y="7.3" width="8.8" height="2.7" fill="#fff"/></g></svg>
<div class="t srow" style="left:108.3px;top:682.19px;">小売業</div>
<svg width="16" height="17" viewBox="0 0 24.4586 25.9873" style="position:absolute;left:243px;top:684px"><g transform="translate(0.229 0.978)"><path d="M19.14 12.94c.04-.3.06-.61.06-.94 0-.32-.02-.64-.07-.94l2.03-1.58c.18-.14.23-.41.12-.61l-1.92-3.32c-.12-.22-.37-.29-.59-.22l-2.39.96c-.5-.38-1.03-.7-1.62-.94l-.36-2.54c-.04-.24-.24-.41-.48-.41h-3.84c-.24 0-.43.17-.47.41l-.36 2.54c-.59.24-1.13.57-1.62.94l-2.39-.96c-.22-.08-.47 0-.59.22L2.74 8.87c-.12.21-.08.47.12.61l2.03 1.58c-.05.3-.09.63-.09.94s.02.64.07.94l-2.03 1.58c-.18.14-.23.41-.12.61l1.92 3.32c.12.22.37.29.59.22l2.39-.96c.5.38 1.03.7 1.62.94l.36 2.54c.05.24.24.41.48.41h3.84c.24 0 .44-.17.47-.41l.36-2.54c.59-.24 1.13-.56 1.62-.94l2.39.96c.22.08.47 0 .59-.22l1.92-3.32c.12-.22.07-.47-.12-.61l-2.01-1.58zM12 15.6c-1.98 0-3.6-1.62-3.6-3.6s1.62-3.6 3.6-3.6 3.6 1.62 3.6 3.6-1.62 3.6-3.6 3.6z" fill="#8d9ba8"/></g></svg>
<div class="a sdiv" style="top:704.79px"></div>
<svg width="5" height="8" viewBox="0 0 5 8" style="position:absolute;left:68px;top:715px"><g transform="translate(0.300 0.120)"><path d="M0 0L4.4 3.8L0 7.6z" fill="#fff"/></g></svg>
<svg width="13" height="11" viewBox="0 0 13 11" style="position:absolute;left:86px;top:715px"><g transform="translate(0.000 0.120)"><rect x="0" y="0" width="2.9" height="2.7" fill="#fff"/><rect x="4.2" y="0" width="8.8" height="2.7" fill="#fff"/><rect x="0" y="3.65" width="2.9" height="2.7" fill="#fff"/><rect x="4.2" y="3.65" width="8.8" height="2.7" fill="#fff"/><rect x="0" y="7.3" width="2.9" height="2.7" fill="#fff"/><rect x="4.2" y="7.3" width="8.8" height="2.7" fill="#fff"/></g></svg>
<div class="t srow" style="left:108.3px;top:709.12px;">情報・通信</div>
<svg width="16" height="17" viewBox="0 0 24.4586 25.9873" style="position:absolute;left:243px;top:711px"><g transform="translate(0.229 0.871)"><path d="M19.14 12.94c.04-.3.06-.61.06-.94 0-.32-.02-.64-.07-.94l2.03-1.58c.18-.14.23-.41.12-.61l-1.92-3.32c-.12-.22-.37-.29-.59-.22l-2.39.96c-.5-.38-1.03-.7-1.62-.94l-.36-2.54c-.04-.24-.24-.41-.48-.41h-3.84c-.24 0-.43.17-.47.41l-.36 2.54c-.59.24-1.13.57-1.62.94l-2.39-.96c-.22-.08-.47 0-.59.22L2.74 8.87c-.12.21-.08.47.12.61l2.03 1.58c-.05.3-.09.63-.09.94s.02.64.07.94l-2.03 1.58c-.18.14-.23.41-.12.61l1.92 3.32c.12.22.37.29.59.22l2.39-.96c.5.38 1.03.7 1.62.94l.36 2.54c.05.24.24.41.48.41h3.84c.24 0 .44-.17.47-.41l.36-2.54c.59-.24 1.13-.56 1.62-.94l2.39.96c.22.08.47 0 .59-.22l1.92-3.32c.12-.22.07-.47-.12-.61l-2.01-1.58zM12 15.6c-1.98 0-3.6-1.62-3.6-3.6s1.62-3.6 3.6-3.6 3.6 1.62 3.6 3.6-1.62 3.6-3.6 3.6z" fill="#8d9ba8"/></g></svg>
<div class="a sdiv" style="top:731.72px"></div>
<svg width="5" height="8" viewBox="0 0 5 8" style="position:absolute;left:68px;top:742px"><g transform="translate(0.300 0.050)"><path d="M0 0L4.4 3.8L0 7.6z" fill="#fff"/></g></svg>
<svg width="13" height="11" viewBox="0 0 13 11" style="position:absolute;left:86px;top:742px"><g transform="translate(0.000 0.050)"><rect x="0" y="0" width="2.9" height="2.7" fill="#fff"/><rect x="4.2" y="0" width="8.8" height="2.7" fill="#fff"/><rect x="0" y="3.65" width="2.9" height="2.7" fill="#fff"/><rect x="4.2" y="3.65" width="8.8" height="2.7" fill="#fff"/><rect x="0" y="7.3" width="2.9" height="2.7" fill="#fff"/><rect x="4.2" y="7.3" width="8.8" height="2.7" fill="#fff"/></g></svg>
<div class="t srow" style="left:108.3px;top:736.05px;">機械</div>
<svg width="16" height="17" viewBox="0 0 24.4586 25.9873" style="position:absolute;left:243px;top:738px"><g transform="translate(0.229 0.764)"><path d="M19.14 12.94c.04-.3.06-.61.06-.94 0-.32-.02-.64-.07-.94l2.03-1.58c.18-.14.23-.41.12-.61l-1.92-3.32c-.12-.22-.37-.29-.59-.22l-2.39.96c-.5-.38-1.03-.7-1.62-.94l-.36-2.54c-.04-.24-.24-.41-.48-.41h-3.84c-.24 0-.43.17-.47.41l-.36 2.54c-.59.24-1.13.57-1.62.94l-2.39-.96c-.22-.08-.47 0-.59.22L2.74 8.87c-.12.21-.08.47.12.61l2.03 1.58c-.05.3-.09.63-.09.94s.02.64.07.94l-2.03 1.58c-.18.14-.23.41-.12.61l1.92 3.32c.12.22.37.29.59.22l2.39-.96c.5.38 1.03.7 1.62.94l.36 2.54c.05.24.24.41.48.41h3.84c.24 0 .44-.17.47-.41l.36-2.54c.59-.24 1.13-.56 1.62-.94l2.39.96c.22.08.47 0 .59-.22l1.92-3.32c.12-.22.07-.47-.12-.61l-2.01-1.58zM12 15.6c-1.98 0-3.6-1.62-3.6-3.6s1.62-3.6 3.6-3.6 3.6 1.62 3.6 3.6-1.62 3.6-3.6 3.6z" fill="#8d9ba8"/></g></svg>
<div class="a sdiv" style="top:758.65px"></div>
<svg width="5" height="9" viewBox="0 0 5 9" style="position:absolute;left:68px;top:768px"><g transform="translate(0.300 0.980)"><path d="M0 0L4.4 3.8L0 7.6z" fill="#fff"/></g></svg>
<svg width="13" height="11" viewBox="0 0 13 11" style="position:absolute;left:86px;top:768px"><g transform="translate(0.000 0.980)"><rect x="0" y="0" width="2.9" height="2.7" fill="#fff"/><rect x="4.2" y="0" width="8.8" height="2.7" fill="#fff"/><rect x="0" y="3.65" width="2.9" height="2.7" fill="#fff"/><rect x="4.2" y="3.65" width="8.8" height="2.7" fill="#fff"/><rect x="0" y="7.3" width="2.9" height="2.7" fill="#fff"/><rect x="4.2" y="7.3" width="8.8" height="2.7" fill="#fff"/></g></svg>
<div class="t srow" style="left:108.3px;top:762.98px;">製造・建設設計</div>
<svg width="16" height="17" viewBox="0 0 24.4586 25.9873" style="position:absolute;left:243px;top:765px"><g transform="translate(0.229 0.657)"><path d="M19.14 12.94c.04-.3.06-.61.06-.94 0-.32-.02-.64-.07-.94l2.03-1.58c.18-.14.23-.41.12-.61l-1.92-3.32c-.12-.22-.37-.29-.59-.22l-2.39.96c-.5-.38-1.03-.7-1.62-.94l-.36-2.54c-.04-.24-.24-.41-.48-.41h-3.84c-.24 0-.43.17-.47.41l-.36 2.54c-.59.24-1.13.57-1.62.94l-2.39-.96c-.22-.08-.47 0-.59.22L2.74 8.87c-.12.21-.08.47.12.61l2.03 1.58c-.05.3-.09.63-.09.94s.02.64.07.94l-2.03 1.58c-.18.14-.23.41-.12.61l1.92 3.32c.12.22.37.29.59.22l2.39-.96c.5.38 1.03.7 1.62.94l.36 2.54c.05.24.24.41.48.41h3.84c.24 0 .44-.17.47-.41l.36-2.54c.59-.24 1.13-.56 1.62-.94l2.39.96c.22.08.47 0 .59-.22l1.92-3.32c.12-.22.07-.47-.12-.61l-2.01-1.58zM12 15.6c-1.98 0-3.6-1.62-3.6-3.6s1.62-3.6 3.6-3.6 3.6 1.62 3.6 3.6-1.62 3.6-3.6 3.6z" fill="#8d9ba8"/></g></svg>
<div class="a sdiv" style="top:785.58px"></div>
<svg width="5" height="9" viewBox="0 0 5 9" style="position:absolute;left:68px;top:795px"><g transform="translate(0.300 0.910)"><path d="M0 0L4.4 3.8L0 7.6z" fill="#fff"/></g></svg>
<svg width="13" height="11" viewBox="0 0 13 11" style="position:absolute;left:86px;top:795px"><g transform="translate(0.000 0.910)"><rect x="0" y="0" width="2.9" height="2.7" fill="#fff"/><rect x="4.2" y="0" width="8.8" height="2.7" fill="#fff"/><rect x="0" y="3.65" width="2.9" height="2.7" fill="#fff"/><rect x="4.2" y="3.65" width="8.8" height="2.7" fill="#fff"/><rect x="0" y="7.3" width="2.9" height="2.7" fill="#fff"/><rect x="4.2" y="7.3" width="8.8" height="2.7" fill="#fff"/></g></svg>
<div class="t srow" style="left:108.3px;top:789.91px;">農林水産業</div>
<svg width="16" height="17" viewBox="0 0 24.4586 25.9873" style="position:absolute;left:243px;top:792px"><g transform="translate(0.229 0.550)"><path d="M19.14 12.94c.04-.3.06-.61.06-.94 0-.32-.02-.64-.07-.94l2.03-1.58c.18-.14.23-.41.12-.61l-1.92-3.32c-.12-.22-.37-.29-.59-.22l-2.39.96c-.5-.38-1.03-.7-1.62-.94l-.36-2.54c-.04-.24-.24-.41-.48-.41h-3.84c-.24 0-.43.17-.47.41l-.36 2.54c-.59.24-1.13.57-1.62.94l-2.39-.96c-.22-.08-.47 0-.59.22L2.74 8.87c-.12.21-.08.47.12.61l2.03 1.58c-.05.3-.09.63-.09.94s.02.64.07.94l-2.03 1.58c-.18.14-.23.41-.12.61l1.92 3.32c.12.22.37.29.59.22l2.39-.96c.5.38 1.03.7 1.62.94l.36 2.54c.05.24.24.41.48.41h3.84c.24 0 .44-.17.47-.41l.36-2.54c.59-.24 1.13-.56 1.62-.94l2.39.96c.22.08.47 0 .59-.22l1.92-3.32c.12-.22.07-.47-.12-.61l-2.01-1.58zM12 15.6c-1.98 0-3.6-1.62-3.6-3.6s1.62-3.6 3.6-3.6 3.6 1.62 3.6 3.6-1.62 3.6-3.6 3.6z" fill="#8d9ba8"/></g></svg>
<div class="a" style="left:278.3px;top:0;width:6px;height:809px;background:#fff"></div>
<div class="a" style="left:831px;top:0;width:5.3px;height:809px;background:#fff"></div>
<div class="a foot"></div>
<div class="t " style="left:60px;top:813.5px;color:#555;font-size:10px">Copyright 2021. Legaltech, Inc. All Rights Reserved.</div>
<div class="a mid"></div>
<div class="a" style="left:296px;top:13px;width:378px;height:33px;border:1px solid #c9d0d7;background:#fff"></div>
<svg width="22" height="22" viewBox="0 0 25.1429 25.1429" style="position:absolute;left:306px;top:18px"><g transform="translate(0.571 0.571)"><path d="M15.500 14h-.79l-.28-.27C15.410 12.590 16 11.110 16 9.500 16 5.910 13.090 3 9.500 3S3 5.910 3 9.500 5.910 16 9.500 16c1.610 0 3.090-.59 4.230-1.570l.27.28v.79l5 4.990L20.490 19l-4.990-5zm-6 0C7.010 14 5 11.990 5 9.500S7.010 5 9.500 5 14 7.010 14 9.500 11.990 14 9.500 14z" fill="#3d9bdc"/></g></svg>
<div class="t " style="left:336.8px;top:18.9px;color:#c2c6ca;font-size:11.3px;width:281.5px;overflow:hidden;text-spacing-trim:space-all">検索キーワードを入力してください。（ファイル名、フ</div>
<svg width="8" height="9" viewBox="0 0 8 9" style="position:absolute;left:653px;top:24px"><g transform="translate(0.000 0.500)"><path d="M0.8 0.8L7.2 7.2M7.2 0.8L0.8 7.2" stroke="#707070" stroke-width="1.5"/></g></svg>
<div class="a" style="left:673.5px;top:13px;width:53.5px;height:33px;background:#4ba3e0;color:#fff;font-weight:bold;font-size:11.5px;line-height:32px;text-align:center">検索</div>
<div class="a" style="left:733px;top:13px;width:84.5px;height:33px;background:#fff;border:1px solid #ccd2d8;color:#444;font-weight:bold;font-size:11.3px;line-height:32.5px;text-align:center">詳細検索</div>
<div class="a hl" style="top:57px"></div>
<svg width="21" height="20" viewBox="0 0 25.8462 24.6154" style="position:absolute;left:302px;top:77px"><g transform="translate(0.923 0.308)"><path d="M10 4H4c-1.1 0-1.99.9-1.99 2L2 18c0 1.1.9 2 2 2h16c1.1 0 2-.9 2-2V8c0-1.1-.9-2-2-2h-8l-2-2z" fill="#45bdf5"/></g></svg>
<div class="t " style="left:325.8px;top:76.5px;color:#666;font-size:14.300px">ファイル</div>
<svg width="7" height="11" viewBox="0 0 7 11" style="position:absolute;left:388px;top:82px"><path d="M1 1L5.800 5.500L1 10" fill="none" stroke="#aaa" stroke-width="1.700"/></svg>
<div class="a" style="left:402.3px;top:78.300px;width:81px;height:17px;background:#e8f1f8"></div>
<div class="t " style="left:407.3px;top:76.3px;color:#2f8fd6;font-weight:bold;font-size:14.300px;-webkit-text-stroke:0.25px #2f8fd6">サービス業</div>
<div class="a" style="left:701.500px;top:75px;width:114.500px;height:34.800px;border:1px solid #4ba3e0;background:#fff"></div>
<div class="t " style="left:747.5px;top:82.0px;color:#4a9fdc;font-weight:bold;font-size:11.200px;-webkit-text-stroke:0.3px #4a9fdc">追加</div>
<div class="t " style="left:794.5px;top:81.8px;color:#4ba3e0;font-size:12.5px;font-weight:bold">+</div>
<div class="a hl" style="top:117px"></div>
<div class="t " style="left:303.7px;top:130.2px;color:#333;font-size:11.600px">ファイル数:</div>
<div class="t " style="left:368.5px;top:130.2px;color:#2f8fd6;font-weight:bold;font-size:11.600px;letter-spacing:-0.6px">16</div>
<div class="a" style="left:284px;top:165px;width:542px;height:28.500px;background:#e6f1fa;border-bottom:1px solid #bfcfdc"></div>
<div class="t " style="left:411.5px;top:162.2px;color:#333;font-size:11.200px">名前</div>
<svg width="11" height="7" viewBox="0 0 11 7" style="position:absolute;left:443px;top:168px"><g transform="translate(0.300 0.200)"><path d="M1 5L5 1.200L9 5" fill="none" stroke="#3d9bdc" stroke-width="1.800"/></g></svg>
<div class="t " style="left:597px;top:162.2px;color:#333;font-size:11.200px">アップロード日</div>
<div class="t " style="left:712px;top:162.2px;color:#333;font-size:11.200px">サイズ</div>
<svg width="20" height="19" viewBox="0 0 25.9459 24.6486" style="position:absolute;left:785px;top:163px"><g transform="translate(0.973 0.324)"><path d="M12 17.27L18.18 21l-1.64-7.03L22 9.24l-7.19-.61L12 2 9.19 8.63 2 9.24l5.46 4.73L5.82 21z" fill="#f3b731"/></g></svg>
<div class="a" style="left:284px;top:236.6px;width:542px;height:1px;background:#e6e9ec"></div>
<svg width="19" height="20" viewBox="0 0 19 20" style="position:absolute;left:304px;top:205px"><rect width="18.800" height="19.200" fill="#2f80f0"/><text x="9.400" y="13.900" font-size="10.200" font-weight="bold" fill="#fff" text-anchor="middle" font-family="Liberation Sans,sans-serif">W</text></svg>
<div class="t " style="left:331.8px;top:205.5px;color:#333;font-size:11.1px">サービスレベル契約.docx</div>
<div class="t" style="left:585.6px;top:205.4px;width:121px;text-align:center;color:#555;font-size:11.3px">2024-10-14 17:08</div>
<div class="t" style="left:708.8px;top:205.4px;width:60px;text-align:center;color:#555;font-size:11.3px">16.8 KB</div>
<svg width="20" height="20" viewBox="0 0 25.2632 25.2632" style="position:absolute;left:785px;top:205px"><g transform="translate(0.632 0.884)"><path d="M12 17.27L18.18 21l-1.64-7.03L22 9.24l-7.19-.61L12 2 9.19 8.63 2 9.24l5.46 4.73L5.82 21z" fill="#e4e4e4"/></g></svg>
<div class="a" style="left:284px;top:237.1px;width:542px;height:43.6px;background:#dbeaf6"></div>
<svg width="19" height="20" viewBox="0 0 19 20" style="position:absolute;left:304px;top:248px"><g transform="translate(0.000 0.600)"><rect width="18.800" height="19.200" fill="#2f80f0"/><text x="9.400" y="13.900" font-size="10.200" font-weight="bold" fill="#fff" text-anchor="middle" font-family="Liberation Sans,sans-serif">W</text></g></svg>
<div class="t " style="left:331.8px;top:249.1px;color:#3b7fb5;font-weight:bold;font-size:11.1px">サプライヤー契約書.docx</div>
<div class="t" style="left:585.6px;top:249.0px;width:121px;text-align:center;color:#3b7fb5;font-weight:bold;letter-spacing:-0.2px;font-size:11.3px">2024-10-14 17:08</div>
<div class="t" style="left:708.8px;top:249.0px;width:60px;text-align:center;color:#3b7fb5;font-weight:bold;letter-spacing:-0.2px;font-size:11.3px">16.8 KB</div>
<svg width="20" height="20" viewBox="0 0 25.2632 25.2632" style="position:absolute;left:785px;top:249px"><g transform="translate(0.632 0.379)"><path d="M12 17.27L18.18 21l-1.64-7.03L22 9.24l-7.19-.61L12 2 9.19 8.63 2 9.24l5.46 4.73L5.82 21z" fill="#e9edf0"/></g></svg>
<div class="a" style="left:284px;top:323.8px;width:542px;height:1px;background:#e6e9ec"></div>
<svg width="19" height="20" viewBox="0 0 19 20" style="position:absolute;left:304px;top:292px"><g transform="translate(0.000 0.200)"><rect width="18.800" height="19.200" fill="#2f80f0"/><text x="9.400" y="13.900" font-size="10.200" font-weight="bold" fill="#fff" text-anchor="middle" font-family="Liberation Sans,sans-serif">W</text></g></svg>
<div class="t " style="left:331.8px;top:292.7px;color:#333;font-size:11.1px">フランチャイズ契約書.docx</div>
<div class="t" style="left:585.6px;top:292.6px;width:121px;text-align:center;color:#555;font-size:11.3px">2024-10-14 17:08</div>
<div class="t" style="left:708.8px;top:292.6px;width:60px;text-align:center;color:#555;font-size:11.3px">16.9 KB</div>
<svg width="20" height="20" viewBox="0 0 25.2632 25.2632" style="position:absolute;left:785px;top:292px"><g transform="translate(0.632 1.137)"><path d="M12 17.27L18.18 21l-1.64-7.03L22 9.24l-7.19-.61L12 2 9.19 8.63 2 9.24l5.46 4.73L5.82 21z" fill="#e4e4e4"/></g></svg>
<div class="a" style="left:284px;top:367.4px;width:542px;height:1px;background:#e6e9ec"></div>
<svg width="19" height="21" viewBox="0 0 19 21" style="position:absolute;left:304px;top:335px"><g transform="translate(0.000 0.800)"><rect width="18.800" height="19.200" fill="#2f80f0"/><text x="9.400" y="13.900" font-size="10.200" font-weight="bold" fill="#fff" text-anchor="middle" font-family="Liberation Sans,sans-serif">W</text></g></svg>
<div class="t " style="left:331.8px;top:336.3px;color:#333;font-size:11.1px">人事評価レポート.docx</div>
<div class="t" style="left:585.6px;top:336.2px;width:121px;text-align:center;color:#555;font-size:11.3px">2024-10-14 17:08</div>
<div class="t" style="left:708.8px;top:336.2px;width:60px;text-align:center;color:#555;font-size:11.3px">16.8 KB</div>
<svg width="20" height="20" viewBox="0 0 25.2632 25.2632" style="position:absolute;left:785px;top:336px"><g transform="translate(0.632 0.632)"><path d="M12 17.27L18.18 21l-1.64-7.03L22 9.24l-7.19-.61L12 2 9.19 8.63 2 9.24l5.46 4.73L5.82 21z" fill="#e4e4e4"/></g></svg>
<div class="a" style="left:284px;top:411.0px;width:542px;height:1px;background:#e6e9ec"></div>
<svg width="19" height="20" viewBox="0 0 19 20" style="position:absolute;left:304px;top:379px"><g transform="translate(0.000 0.400)"><rect width="18.800" height="19.200" fill="#2f80f0"/><text x="9.400" y="13.900" font-size="10.200" font-weight="bold" fill="#fff" text-anchor="middle" font-family="Liberation Sans,sans-serif">W</text></g></svg>
<div class="t " style="left:331.8px;top:379.9px;color:#333;font-size:11.1px">会計報告書（決算書、収支計算書）.docx</div>
<div class="t" style="left:585.6px;top:379.8px;width:121px;text-align:center;color:#555;font-size:11.3px">2024-10-14 17:08</div>
<div class="t" style="left:708.8px;top:379.8px;width:60px;text-align:center;color:#555;font-size:11.3px">16.8 KB</div>
<svg width="20" height="20" viewBox="0 0 25.2632 25.2632" style="position:absolute;left:785px;top:380px"><g transform="translate(0.632 0.126)"><path d="M12 17.27L18.18 21l-1.64-7.03L22 9.24l-7.19-.61L12 2 9.19 8.63 2 9.24l5.46 4.73L5.82 21z" fill="#e4e4e4"/></g></svg>
<div class="a" style="left:284px;top:454.6px;width:542px;height:1px;background:#e6e9ec"></div>
<svg width="19" height="20" viewBox="0 0 19 20" style="position:absolute;left:304px;top:423px"><rect width="18.800" height="19.200" fill="#2f80f0"/><text x="9.400" y="13.900" font-size="10.200" font-weight="bold" fill="#fff" text-anchor="middle" font-family="Liberation Sans,sans-serif">W</text></svg>
<div class="t " style="left:331.8px;top:423.5px;color:#333;font-size:11.1px">会計報告書（決算書、収支計算書）.docx.docx</div>
<div class="t" style="left:585.6px;top:423.4px;width:121px;text-align:center;color:#555;font-size:11.3px">2024-10-14 17:08</div>
<div class="t" style="left:708.8px;top:423.4px;width:60px;text-align:center;color:#555;font-size:11.3px">16.8 KB</div>
<svg width="20" height="20" viewBox="0 0 25.2632 25.2632" style="position:absolute;left:785px;top:423px"><g transform="translate(0.632 0.884)"><path d="M12 17.27L18.18 21l-1.64-7.03L22 9.24l-7.19-.61L12 2 9.19 8.63 2 9.24l5.46 4.73L5.82 21z" fill="#e4e4e4"/></g></svg>
<div class="a" style="left:284px;top:498.2px;width:542px;height:1px;background:#e6e9ec"></div>
<svg width="19" height="20" viewBox="0 0 19 20" style="position:absolute;left:304px;top:466px"><g transform="translate(0.000 0.600)"><rect width="18.800" height="19.200" fill="#f5484d"/><path d="M9.300 5.200Q9.700 8.300 9.300 10.300Q7.500 12 5 13M9.300 10.300Q11.800 10.700 13.700 11.900" fill="none" stroke="#fff" stroke-width="1.750" stroke-linecap="round" stroke-linejoin="round"/></g></svg>
<div class="t " style="left:331.8px;top:467.1px;color:#333;font-size:11.1px">個人情報の取扱い契約書.pdf</div>
<div class="t" style="left:585.6px;top:467.0px;width:121px;text-align:center;color:#555;font-size:11.3px">2024-10-14 17:08</div>
<div class="t" style="left:708.8px;top:467.0px;width:60px;text-align:center;color:#555;font-size:11.3px">65.9 KB</div>
<svg width="20" height="20" viewBox="0 0 25.2632 25.2632" style="position:absolute;left:785px;top:467px"><g transform="translate(0.632 0.379)"><path d="M12 17.27L18.18 21l-1.64-7.03L22 9.24l-7.19-.61L12 2 9.19 8.63 2 9.24l5.46 4.73L5.82 21z" fill="#e4e4e4"/></g></svg>
<div class="a" style="left:284px;top:541.8px;width:542px;height:1px;background:#e6e9ec"></div>
<svg width="19" height="20" viewBox="0 0 19 20" style="position:absolute;left:304px;top:510px"><g transform="translate(0.000 0.200)"><rect width="18.800" height="19.200" fill="#2f80f0"/><text x="9.400" y="13.900" font-size="10.200" font-weight="bold" fill="#fff" text-anchor="middle" font-family="Liberation Sans,sans-serif">W</text></g></svg>
<div class="t " style="left:331.8px;top:510.7px;color:#333;font-size:11.1px">売上報告書.docx</div>
<div class="t" style="left:585.6px;top:510.6px;width:121px;text-align:center;color:#555;font-size:11.3px">2024-10-14 17:08</div>
<div class="t" style="left:708.8px;top:510.6px;width:60px;text-align:center;color:#555;font-size:11.3px">16.8 KB</div>
<svg width="20" height="20" viewBox="0 0 25.2632 25.2632" style="position:absolute;left:785px;top:510px"><g transform="translate(0.632 1.137)"><path d="M12 17.27L18.18 21l-1.64-7.03L22 9.24l-7.19-.61L12 2 9.19 8.63 2 9.24l5.46 4.73L5.82 21z" fill="#e4e4e4"/></g></svg>
<div class="a" style="left:284px;top:585.4px;width:542px;height:1px;background:#e6e9ec"></div>
<svg width="19" height="20" viewBox="0 0 19 20" style="position:absolute;left:304px;top:553px"><g transform="translate(0.000 0.800)"><rect width="18.800" height="19.200" fill="#2f80f0"/><text x="9.400" y="13.900" font-size="10.200" font-weight="bold" fill="#fff" text-anchor="middle" font-family="Liberation Sans,sans-serif">W</text></g></svg>
<div class="t " style="left:331.8px;top:554.3px;color:#333;font-size:11.1px">従業員の履歴書.docx</div>
<div class="t" style="left:585.6px;top:554.2px;width:121px;text-align:center;color:#555;font-size:11.3px">2024-10-14 17:08</div>
<div class="t" style="left:708.8px;top:554.2px;width:60px;text-align:center;color:#555;font-size:11.3px">16.8 KB</div>
<svg width="20" height="20" viewBox="0 0 25.2632 25.2632" style="position:absolute;left:785px;top:554px"><g transform="translate(0.632 0.632)"><path d="M12 17.27L18.18 21l-1.64-7.03L22 9.24l-7.19-.61L12 2 9.19 8.63 2 9.24l5.46 4.73L5.82 21z" fill="#e4e4e4"/></g></svg>
<div class="a" style="left:284px;top:629.0px;width:542px;height:1px;background:#e6e9ec"></div>
<svg width="19" height="20" viewBox="0 0 19 20" style="position:absolute;left:304px;top:597px"><g transform="translate(0.000 0.400)"><rect width="18.800" height="19.200" fill="#2f80f0"/><text x="9.400" y="13.900" font-size="10.200" font-weight="bold" fill="#fff" text-anchor="middle" font-family="Liberation Sans,sans-serif">W</text></g></svg>
<div class="t " style="left:331.8px;top:597.9px;color:#333;font-size:11.1px">社員の勤務契約書.docx</div>
<div class="t" style="left:585.6px;top:597.8px;width:121px;text-align:center;color:#555;font-size:11.3px">2024-10-14 17:08</div>
<div class="t" style="left:708.8px;top:597.8px;width:60px;text-align:center;color:#555;font-size:11.3px">16.8 KB</div>
<svg width="20" height="20" viewBox="0 0 25.2632 25.2632" style="position:absolute;left:785px;top:598px"><g transform="translate(0.632 0.126)"><path d="M12 17.27L18.18 21l-1.64-7.03L22 9.24l-7.19-.61L12 2 9.19 8.63 2 9.24l5.46 4.73L5.82 21z" fill="#e4e4e4"/></g></svg>
<div class="a" style="left:284px;top:672.6px;width:542px;height:1px;background:#e6e9ec"></div>
<svg width="19" height="20" viewBox="0 0 19 20" style="position:absolute;left:304px;top:641px"><rect width="18.800" height="19.200" fill="#f5484d"/><path d="M9.300 5.200Q9.700 8.300 9.300 10.300Q7.500 12 5 13M9.300 10.300Q11.800 10.700 13.700 11.900" fill="none" stroke="#fff" stroke-width="1.750" stroke-linecap="round" stroke-linejoin="round"/></svg>
<div class="t " style="left:331.8px;top:641.5px;color:#333;font-size:11.1px">秘密保持契約書.pdf</div>
<div class="t" style="left:585.6px;top:641.4px;width:121px;text-align:center;color:#555;font-size:11.3px">2024-10-14 17:08</div>
<div class="t" style="left:708.8px;top:641.4px;width:60px;text-align:center;color:#555;font-size:11.3px">1.2 MB</div>
<svg width="20" height="20" viewBox="0 0 25.2632 25.2632" style="position:absolute;left:785px;top:641px"><g transform="translate(0.632 0.884)"><path d="M12 17.27L18.18 21l-1.64-7.03L22 9.24l-7.19-.61L12 2 9.19 8.63 2 9.24l5.46 4.73L5.82 21z" fill="#e4e4e4"/></g></svg>
<div class="a" style="left:284px;top:716.2px;width:542px;height:1px;background:#e6e9ec"></div>
<svg width="19" height="20" viewBox="0 0 19 20" style="position:absolute;left:304px;top:684px"><g transform="translate(0.000 0.600)"><rect width="18.800" height="19.200" fill="#2f80f0"/><text x="9.400" y="13.900" font-size="10.200" font-weight="bold" fill="#fff" text-anchor="middle" font-family="Liberation Sans,sans-serif">W</text></g></svg>
<div class="t " style="left:331.8px;top:685.1px;color:#333;font-size:11.1px">給与・報酬関連の資料.docx</div>
<div class="t" style="left:585.6px;top:685.0px;width:121px;text-align:center;color:#555;font-size:11.3px">2024-10-14 17:08</div>
<div class="t" style="left:708.8px;top:685.0px;width:60px;text-align:center;color:#555;font-size:11.3px">16.8 KB</div>
<svg width="20" height="20" viewBox="0 0 25.2632 25.2632" style="position:absolute;left:785px;top:685px"><g transform="translate(0.632 0.379)"><path d="M12 17.27L18.18 21l-1.64-7.03L22 9.24l-7.19-.61L12 2 9.19 8.63 2 9.24l5.46 4.73L5.82 21z" fill="#e4e4e4"/></g></svg>
<div class="a" style="left:284px;top:759.8px;width:542px;height:1px;background:#e6e9ec"></div>
<svg width="19" height="20" viewBox="0 0 19 20" style="position:absolute;left:304px;top:728px"><g transform="translate(0.000 0.200)"><rect width="18.800" height="19.200" fill="#2f80f0"/><text x="9.400" y="13.900" font-size="10.200" font-weight="bold" fill="#fff" text-anchor="middle" font-family="Liberation Sans,sans-serif">W</text></g></svg>
<div class="t " style="left:331.8px;top:728.7px;color:#333;font-size:11.1px">顧客アンケート.docx</div>
<div class="t" style="left:585.6px;top:728.6px;width:121px;text-align:center;color:#555;font-size:11.3px">2024-10-14 17:08</div>
<div class="t" style="left:708.8px;top:728.6px;width:60px;text-align:center;color:#555;font-size:11.3px">16.8 KB</div>
<svg width="20" height="20" viewBox="0 0 25.2632 25.2632" style="position:absolute;left:785px;top:728px"><g transform="translate(0.632 1.137)"><path d="M12 17.27L18.18 21l-1.64-7.03L22 9.24l-7.19-.61L12 2 9.19 8.63 2 9.24l5.46 4.73L5.82 21z" fill="#e4e4e4"/></g></svg>
<div class="a" style="left:284px;top:803.4px;width:542px;height:1px;background:#e6e9ec"></div>
<svg width="19" height="20" viewBox="0 0 19 20" style="position:absolute;left:304px;top:771px"><g transform="translate(0.000 0.800)"><rect width="18.800" height="19.200" fill="#2f80f0"/><text x="9.400" y="13.900" font-size="10.200" font-weight="bold" fill="#fff" text-anchor="middle" font-family="Liberation Sans,sans-serif">W</text></g></svg>
<div class="t " style="left:331.8px;top:772.3px;color:#333;font-size:11.1px">顧客の注文履歴.docx</div>
<div class="t" style="left:585.6px;top:772.2px;width:121px;text-align:center;color:#555;font-size:11.3px">2024-10-14 17:08</div>
<div class="t" style="left:708.8px;top:772.2px;width:60px;text-align:center;color:#555;font-size:11.3px">16.8 KB</div>
<svg width="20" height="20" viewBox="0 0 25.2632 25.2632" style="position:absolute;left:785px;top:772px"><g transform="translate(0.632 0.632)"><path d="M12 17.27L18.18 21l-1.64-7.03L22 9.24l-7.19-.61L12 2 9.19 8.63 2 9.24l5.46 4.73L5.82 21z" fill="#e4e4e4"/></g></svg>
<div class="a" style="left:826px;top:180.500px;width:5.500px;height:512.500px;background:#aebccb;border-radius:3px"></div>
<div class="a" style="left:836px;top:0;width:1px;height:809px;background:#d5dbe3"></div>
<div class="a" style="left:280.3px;top:400.0px;width:1.6px;height:1.6px;background:#555"></div>
<div class="a" style="left:280.3px;top:403.8px;width:1.6px;height:1.6px;background:#555"></div>
<div class="a" style="left:280.3px;top:407.6px;width:1.6px;height:1.6px;background:#555"></div>
<div class="a" style="left:833.3px;top:400.0px;width:1.6px;height:1.6px;background:#555"></div>
<div class="a" style="left:833.3px;top:403.8px;width:1.6px;height:1.6px;background:#555"></div>
<div class="a" style="left:833.3px;top:407.6px;width:1.6px;height:1.6px;background:#555"></div>
<div class="a" style="left:848px;top:11px;width:33px;height:32.500px;background:#eff1f3;border:1px solid #d5dbe0"></div>
<div class="a" style="left:881px;top:11px;width:33.5px;height:32.500px;background:#eff1f3;border:1px solid #d5dbe0"></div>
<svg width="5" height="16" viewBox="0 0 5 16" style="position:absolute;left:862px;top:20px"><g transform="translate(0.200 0.500)"><rect x="0.600" y="0" width="2.800" height="2.800" fill="#4ba3e0"/><rect x="0.600" y="4.500" width="2.800" height="10" fill="#4ba3e0"/></g></svg>
<svg width="13" height="16" viewBox="0 0 13 16" style="position:absolute;left:892px;top:20px"><g transform="translate(0.000 0.500)"><path d="M0 0H13V15L6.500 11.200L0 15z" fill="#4ba3e0"/></g></svg>
<div class="a" style="left:1280.5px;top:11px;width:33.5px;height:32.500px;background:#4ba3e0;border:1px solid #4ba3e0"></div>
<div class="a" style="left:1317.5px;top:11px;width:33.5px;height:32.500px;background:#4ba3e0;border:1px solid #4ba3e0"></div>
<div class="a" style="left:1355px;top:11px;width:32.5px;height:32.500px;background:#eff1f3;border:1px solid #d5dbe0"></div>
<svg width="21" height="17" viewBox="0 0 21 17" style="position:absolute;left:1287px;top:19px"><g transform="translate(0.000 0.400)"><rect width="21" height="16.500" fill="#fff"/><path d="M2.700 1.900H6.500V10.600H18V14.800H2.700z" fill="#4ba3e0"/></g></svg>
<svg width="22" height="17" viewBox="0 0 22 17" style="position:absolute;left:1323px;top:19px"><g transform="translate(0.500 0.400)"><rect x="3.200" y="3.800" width="14.800" height="9" fill="#fff"/><path d="M0.800 4V0.800H4.500M16.500 0.800H20.200V4M20.200 12.500V15.700H16.500M4.500 15.700H0.800V12.500" fill="none" stroke="#fff" stroke-width="1.600"/></g></svg>
<svg width="10" height="9" viewBox="0 0 10 9" style="position:absolute;left:1367px;top:24px"><g transform="translate(0.500 0.100)"><path d="M1.200 1L7.800 7M7.800 1L1.200 7" stroke="#5b9bd5" stroke-width="2"/></g></svg>
<div class="a" style="left:848.3px;top:55.3px;width:539.5px;height:742.700px;background:#999"></div>
<div class="a" style="left:849.8px;top:56.3px;width:538px;height:741.700px;background:#333"></div>
<div class="a" style="left:856.6px;top:56.300px;width:522.900px;height:739.700px;background:#fff"></div>
<div class="a" style="left:1385.3px;top:56.500px;width:2.5px;height:247px;background:#6e6e6e"></div>
<div class="a doc" style="left:1079.9px;top:121.2px;transform:scaleX(0.9595)">サプライヤー契約書</div>
<div class="a doc" style="left:903.8px;top:152.2px;transform:scaleX(0.9705)">本サプライヤー契約書（以下「本契約」という）は、以下の当事者間で締結される。</div>
<div class="a doc" style="left:903.8px;top:184.2px;transform:scaleX(0.9294)">クライアント（購買者）</div>
<div class="a doc" style="left:903.8px;top:200.2px;word-spacing:1.067px">会社名: _ _ _ _ _ _ _ _ _ _ _ _</div>
<div class="a doc" style="left:903.8px;top:216.2px;word-spacing:1.075px">住所: _ _ _ _ _ _ _ _ _ _ _ _</div>
<div class="a doc" style="left:903.8px;top:232.2px;word-spacing:1.033px">代表者名: _ _ _ _ _ _ _ _ _ _ _ _</div>
<div class="a doc" style="left:903.8px;top:248.2px;transform:scaleX(0.9296)">（以下「甲」という）</div>
<div class="a doc" style="left:903.8px;top:279.2px;transform:scaleX(0.9511)">サプライヤー（供給者）</div>
<div class="a doc" style="left:903.8px;top:295.2px;word-spacing:1.067px">会社名: _ _ _ _ _ _ _ _ _ _ _ _</div>
<div class="a doc" style="left:903.8px;top:311.2px;word-spacing:1.075px">住所: _ _ _ _ _ _ _ _ _ _ _ _</div>
<div class="a doc" style="left:903.8px;top:327.2px;word-spacing:1.033px">代表者名: _ _ _ _ _ _ _ _ _ _ _ _</div>
<div class="a doc" style="left:903.8px;top:342.7px;transform:scaleX(0.9296)">（以下「乙」という）</div>
<div class="a doc" style="left:903.8px;top:374.2px;word-spacing:0.811px">契約締結日: _ _ _ _ 年_ _ 月_ _ 日</div>
<div class="a doc" style="left:903.8px;top:390.2px;transform:scaleX(0.9874)">契約期間: 本契約は_ _ 年間有効とする。契約期間終了後は、双方の書面による合意により更新される。</div>
<div class="a doc" style="left:903.8px;top:421.7px;transform:scaleX(0.9442)">第1条（目的）</div>
<div class="a doc" style="left:903.8px;top:453.2px;transform:scaleX(0.9745)">本契約は、甲が乙から商品またはサービス（以下「製品」という）を購入するにあたり、両者の権利義務関係を明</div>
<div class="a doc" style="left:903.8px;top:469.2px;transform:scaleX(0.9528)">確にすることを目的とする。</div>
<div class="a doc" style="left:903.8px;top:500.7px;transform:scaleX(0.9582)">第2条（製品の供給）</div>
<div class="a doc" style="left:903.8px;top:532.2px;transform:scaleX(0.9882)">1.製品の内容: 乙は、甲が注文した製品を甲に供給する。製品の詳細、仕様、および数量は、甲から発行される</div>
<div class="a doc" style="left:903.8px;top:548.2px;transform:scaleX(0.9515)">注文書に従うものとする。</div>
<div class="a doc" style="left:903.8px;top:564.2px;transform:scaleX(0.9767)">2.品質基準: 乙は、供給する製品が契約で定められた仕様や品質基準を満たしていることを保証する。甲は、製</div>
<div class="a doc" style="left:903.8px;top:580.2px;transform:scaleX(0.9764)">品がその基準に適合していない場合、返品または交換を要求する権利を有する。</div>
<div class="a doc" style="left:903.8px;top:596.2px;transform:scaleX(0.9844)">3.供給地域: 乙は、_ _ _ （地域）において製品を供給するものとする。</div>
<div class="a doc" style="left:903.8px;top:627.7px;transform:scaleX(0.9536)">第3条（価格と支払条件）</div>
<div class="a doc" style="left:903.8px;top:658.7px;transform:scaleX(0.9797)">1.価格: 甲が乙に支払う製品の価格は、注文書または価格表に記載された価格に基づく。乙は、事前の書面によ</div>
<div class="a doc" style="left:903.8px;top:674.7px;transform:scaleX(0.9517)">る承諾なく、価格を変更することはできない。</div>
<div class="a doc" style="left:903.8px;top:690.7px;transform:scaleX(0.9793)">2.支払条件: 甲は、製品納品後、乙が発行した請求書を受領してから_ _ 日以内に支払うものとする。</div>
<div class="a doc" style="left:903.8px;top:706.7px;transform:scaleX(0.9704)">3.支払方法: 支払いは、銀行振込により行うものとし、振込手数料は甲の負担とする。</div>
<div class="a" style="left:1325px;top:735px;width:46px;height:46px;border-radius:50%;background:#636363"></div>
<div class="a" style="left:1335.2px;top:755.700px;width:5.400px;height:5.400px;border-radius:50%;background:#fff"></div>
<div class="a" style="left:1345.3999999999999px;top:755.700px;width:5.400px;height:5.400px;border-radius:50%;background:#fff"></div>
<div class="a" style="left:1355.7px;top:755.700px;width:5.400px;height:5.400px;border-radius:50%;background:#fff"></div>
</body></html>
